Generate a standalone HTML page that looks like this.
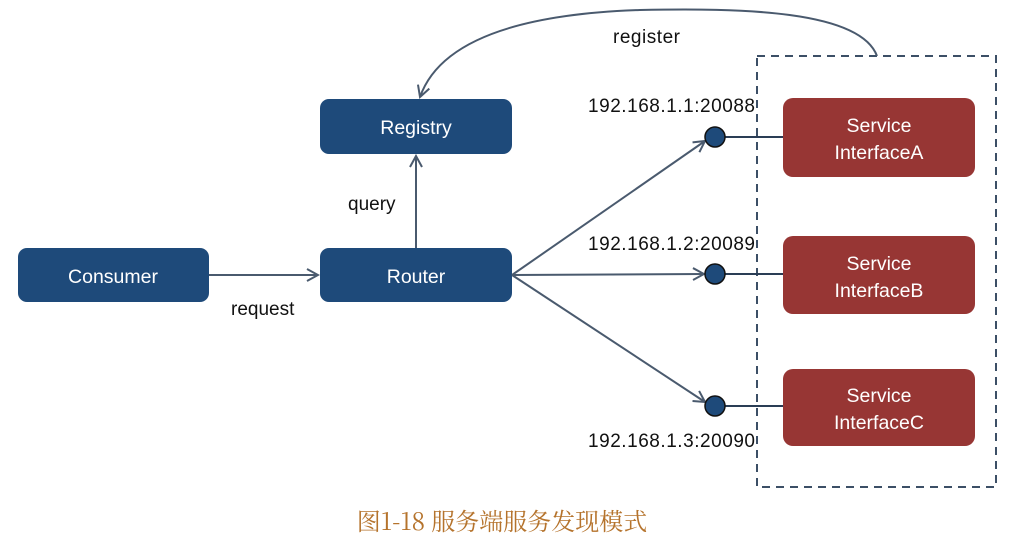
<!DOCTYPE html>
<html><head><meta charset="utf-8"><style>
html,body{margin:0;padding:0;background:#fff;width:1012px;height:543px;overflow:hidden}
svg{display:block}
.b{fill:#1e4a7a}
.r{fill:#973634}
.w{fill:#fff;font-family:"Liberation Sans",sans-serif;font-size:19.5px;text-anchor:middle}
.k{fill:#111;font-family:"Liberation Sans",sans-serif;font-size:19px}
.l{stroke:#4a5a6e;stroke-width:2;fill:none}
</style></head><body>
<svg width="1012" height="543" viewBox="0 0 1012 543">
<defs><marker id="a" markerWidth="14" markerHeight="14" refX="12" refY="7" orient="auto" markerUnits="userSpaceOnUse"><path d="M1,1 L12,7 L1,13" fill="none" stroke="#4a5a6e" stroke-width="2"/></marker></defs>
<rect x="757" y="56" width="239" height="431" fill="none" stroke="#3c4f66" stroke-width="2" stroke-dasharray="8,6"/>
<rect class="b" x="320" y="99" width="192" height="55" rx="9"/>
<rect class="b" x="18" y="248" width="191" height="54" rx="9"/>
<rect class="b" x="320" y="248" width="192" height="54" rx="9"/>
<rect class="r" x="783" y="98" width="192" height="79" rx="10"/>
<rect class="r" x="783" y="236" width="192" height="78" rx="10"/>
<rect class="r" x="783" y="369" width="192" height="77" rx="10"/>
<text class="w" x="416" y="134">Registry</text>
<text class="w" x="113" y="283">Consumer</text>
<text class="w" x="416" y="283">Router</text>
<text class="w" x="879" y="132">Service</text><text class="w" x="879" y="159">InterfaceA</text>
<text class="w" x="879" y="270">Service</text><text class="w" x="879" y="297">InterfaceB</text>
<text class="w" x="879" y="402">Service</text><text class="w" x="879" y="429">InterfaceC</text>
<path class="l" d="M877,56 C860,10 740,8 640,10 C520,14 440,40 420,97" marker-end="url(#a)"/>
<path class="l" d="M416,248 L416,156" marker-end="url(#a)"/>
<path class="l" d="M209,275 L318,275" marker-end="url(#a)"/>
<path class="l" d="M512,275 L705,141" marker-end="url(#a)"/>
<path class="l" d="M512,275 L704,274" marker-end="url(#a)"/>
<path class="l" d="M512,275 L705,402" marker-end="url(#a)"/>
<path stroke="#2a3d55" stroke-width="2" d="M725,137 L783,137 M725,274 L783,274 M725,406 L783,406"/>
<circle cx="715" cy="137" r="10" fill="#1e4a7a" stroke="#111" stroke-width="1.5"/>
<circle cx="715" cy="274" r="10" fill="#1e4a7a" stroke="#111" stroke-width="1.5"/>
<circle cx="715" cy="406" r="10" fill="#1e4a7a" stroke="#111" stroke-width="1.5"/>
<text class="k" x="613" y="43" textLength="67">register</text>
<text class="k" x="588" y="112" textLength="167">192.168.1.1:20088</text>
<text class="k" x="588" y="250" textLength="167">192.168.1.2:20089</text>
<text class="k" x="588" y="447" textLength="167">192.168.1.3:20090</text>
<text class="k" x="348" y="210">query</text>
<text class="k" x="231" y="315">request</text>
<text x="502" y="530" text-anchor="middle" fill="#b5732c" font-size="24" font-family="'Noto Serif CJK SC','Noto Sans CJK SC',serif">图1-18 服务端服务发现模式</text>
</svg>
</body></html>
